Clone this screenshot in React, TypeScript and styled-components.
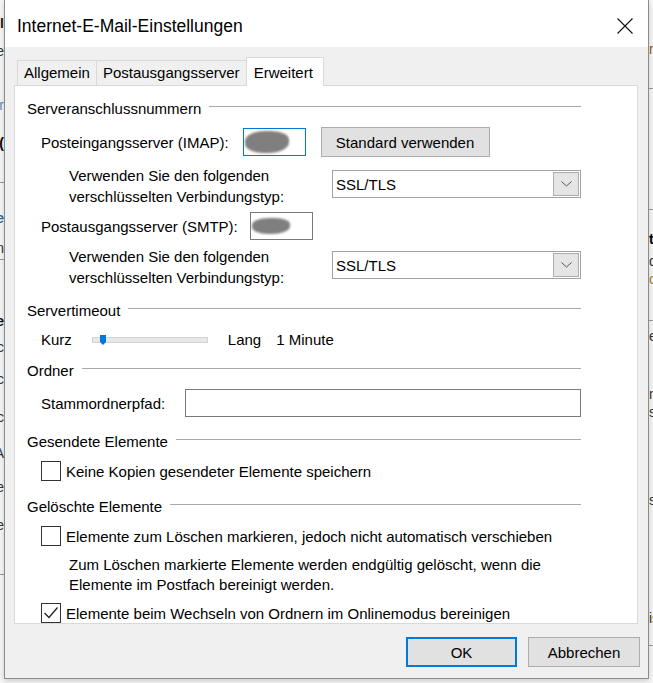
import React from "react";
import styled, { createGlobalStyle } from "styled-components";

const GlobalStyle = createGlobalStyle`
  html, body {
    margin: 0;
    padding: 0;
  }

  body {
    background: #f4f4f4;
    font-family: "Liberation Sans", Arial, sans-serif;
    color: #000;
  }
`;

type Mark = { gap: number; text?: string; color?: string; bold?: boolean; line?: boolean };

const leftMarks: Mark[] = [
  { gap: 14, text: "I", color: "#222", bold: true },
  { gap: 10, text: "e", color: "#333" },
  { gap: 36, text: "r", color: "#6a8bb3" },
  { gap: 20, text: "(", color: "#000", bold: true },
  { gap: 30, line: true },
  { gap: 26, text: "e", color: "#3d6a99", bold: true },
  { gap: 12, text: "n", color: "#333" },
  { gap: 2, line: true },
  { gap: 52, text: "e", color: "#111", bold: true },
  { gap: 8, text: "c", color: "#333" },
  { gap: 14, text: "c", color: "#333" },
  { gap: 20, text: "c", color: "#333" },
  { gap: 18, text: "A", color: "#333" },
  { gap: 16, text: "e", color: "#333" },
  { gap: 20, text: "e", color: "#333" },
  { gap: 40, line: true },
];

const rightMarks: Mark[] = [
  { gap: 40, text: "r", color: "#9a5b12" },
  { gap: 30, line: true },
  { gap: 120, line: true },
  { gap: 20, text: "t", color: "#000", bold: true },
  { gap: 4, text: "d", color: "#333" },
  { gap: 0, text: "c", color: "#b07a2a" },
  { gap: 32, line: true },
  { gap: 6, text: "e", color: "#333" },
  { gap: 40, text: "n", color: "#333" },
  { gap: 0, text: "s", color: "#333" },
  { gap: 70, text: "s", color: "#333" },
  { gap: 100, text: "is", color: "#333" },
  { gap: 18, line: true },
];

const Page = styled.div`
  display: flex;
  width: 653px;
  height: 683px;
  overflow: hidden;
  background: #f7f7f7;
`;

const Edge = styled.div<{ $side: "left" | "right" }>`
  width: 4px;
  flex: none;
  display: flex;
  flex-direction: column;
  overflow: hidden;
  align-items: ${(p) => (p.$side === "left" ? "flex-end" : "flex-start")};
`;

const EdgeMark = styled.div<{ $gap: number; $color?: string; $bold?: boolean }>`
  margin-top: ${(p) => p.$gap}px;
  height: 18px;
  line-height: 18px;
  font-size: 14px;
  font-weight: ${(p) => (p.$bold ? 700 : 400)};
  color: ${(p) => p.$color || "#333"};
  white-space: nowrap;
`;

const EdgeLine = styled.div<{ $gap: number }>`
  margin-top: ${(p) => p.$gap}px;
  width: 20px;
  height: 1px;
  flex: none;
  background: #9a9a9a;
`;

const Dialog = styled.div`
  width: 645px;
  height: 679px;
  flex: none;
  box-sizing: border-box;
  border: 1px solid #8c8c8c;
  border-top: none;
  display: flex;
  flex-direction: column;
  background: #f0f0f0;
  box-shadow: 0 2px 6px rgba(0, 0, 0, 0.18);
  position: relative;
  z-index: 2;
`;

const TitleBar = styled.div`
  height: 47px;
  flex: none;
  background: #fff;
  display: flex;
  justify-content: space-between;
  align-items: flex-start;
  box-sizing: border-box;
  padding: 16px 15px 0 12px;
`;

const Title = styled.div`
  font-size: 17.5px;
  line-height: 20px;
`;

const CloseIcon = styled.svg`
  margin-top: 2px;
  width: 16px;
  height: 16px;
`;

const Body = styled.div`
  flex: 1;
  padding-top: 10px;
  display: flex;
  flex-direction: column;
`;

const TabRow = styled.div`
  display: flex;
  align-items: flex-end;
  height: 28px;
  margin-left: 9px;
  padding-left: 3px;
`;

const Tab = styled.div<{ $active?: boolean }>`
  box-sizing: border-box;
  height: ${(p) => (p.$active ? 29 : 25)}px;
  line-height: ${(p) => (p.$active ? 29 : 24)}px;
  border: 1px solid #d9d9d9;
  border-bottom: none;
  padding: ${(p) => (p.$active ? "0 10px 0 7px" : "0 6px")};
  background: ${(p) => (p.$active ? "#fff" : "#f0f0f0")};
  margin-bottom: ${(p) => (p.$active ? -1 : 0)}px;
  font-size: 15px;
  position: relative;
  z-index: ${(p) => (p.$active ? 1 : 0)};

  & + & {
    margin-left: -1px;
  }
`;

const Panel = styled.div`
  margin: 0 10px 0 9px;
  height: 539px;
  box-sizing: border-box;
  border: 1px solid #d9d9d9;
  background: #fff;
  padding: 13px 56px 0 12px;
  overflow: hidden;
  display: flex;
  flex-direction: column;
  font-size: 15px;
`;

const GroupHeader = styled.div<{ $top?: number }>`
  display: flex;
  align-items: center;
  height: 20px;
  line-height: 20px;
  margin-top: ${(p) => p.$top || 0}px;
  white-space: nowrap;
`;

const Rule = styled.div`
  flex: 1;
  height: 1px;
  background: #a9a9a9;
  margin: -5px 0 0 8px;
`;

const Row = styled.div<{ $top: number; $h: number; $indent?: number }>`
  display: flex;
  align-items: center;
  height: ${(p) => p.$h}px;
  margin-top: ${(p) => p.$top}px;
  padding-left: ${(p) => p.$indent ?? 14}px;
  white-space: nowrap;
`;

const PortInput = styled.div<{ $focused?: boolean; $offset: number }>`
  box-sizing: border-box;
  width: 63px;
  height: 28px;
  margin-left: ${(p) => p.$offset}px;
  border: 1px solid ${(p) => (p.$focused ? "#0078d7" : "#7a7a7a")};
  background: #fff;
  display: flex;
  align-items: center;
  padding-left: 1px;
`;

const Blob = styled.div<{ $w: number; $h: number }>`
  width: ${(p) => p.$w}px;
  height: ${(p) => p.$h}px;
  background: #7f7f7f;
  border-radius: 45% 40% 48% 42%;
  filter: blur(1.2px);
`;

const PushButton = styled.div<{ $w: number; $default?: boolean }>`
  box-sizing: border-box;
  width: ${(p) => p.$w}px;
  height: 30px;
  background: #e1e1e1;
  border: ${(p) => (p.$default ? "2px solid #0078d7" : "1px solid #adadad")};
  display: flex;
  align-items: center;
  justify-content: center;
  font-size: 15px;
`;

const EncryptionRow = styled.div<{ $top: number }>`
  display: grid;
  grid-template-columns: 1fr 249px;
  margin-top: ${(p) => p.$top}px;
  padding-left: 42px;
  line-height: 21px;
`;

const Select = styled.div`
  box-sizing: border-box;
  height: 28px;
  margin-top: 5px;
  border: 1px solid #a2a2a2;
  background: #fff;
  display: flex;
  align-items: center;
  justify-content: space-between;
  padding: 0 1px 0 3px;
`;

const ArrowBox = styled.div`
  box-sizing: border-box;
  width: 26px;
  height: 24px;
  background: #e5e5e5;
  border: 1px solid #adadad;
  display: flex;
  align-items: center;
  justify-content: center;
`;

const Track = styled.div`
  position: relative;
  box-sizing: border-box;
  width: 116px;
  height: 6px;
  margin: 0 20px;
  background: #e7e9e9;
  border: 1px solid #d4d4d4;
`;

const Thumb = styled.svg`
  position: absolute;
  left: 7px;
  top: -3px;
  width: 6px;
  height: 10px;
`;

const Spacer = styled.span<{ $w: number }>`
  display: inline-block;
  width: ${(p) => p.$w}px;
`;

const PathInput = styled.div`
  flex: 1;
  box-sizing: border-box;
  height: 28px;
  margin-left: 20px;
  border: 1px solid #7a7a7a;
  background: #fff;
`;

const Box = styled.div`
  box-sizing: border-box;
  width: 20px;
  height: 20px;
  flex: none;
  border: 1px solid #333;
  background: #fff;
  margin-right: 5px;
  display: flex;
  align-items: center;
  justify-content: center;
`;

const Note = styled.div`
  margin-top: 9px;
  padding-left: 42px;
  line-height: 20px;
`;

const ButtonRow = styled.div`
  display: flex;
  justify-content: flex-end;
  gap: 11px;
  margin-top: 13px;
  padding-right: 8px;
`;

const Checkbox = ({ checked }: { checked?: boolean }) => (
  <Box>
    {checked && (
      <svg width="18" height="18" viewBox="0 0 18 18">
        <path d="M2.5 9 L7 13.5 L15.5 3.5" fill="none" stroke="#222" strokeWidth="1.3" />
      </svg>
    )}
  </Box>
);

const Dropdown = ({ value }: { value: string }) => (
  <Select>
    <span>{value}</span>
    <ArrowBox>
      <svg width="11" height="6" viewBox="0 0 11 6">
        <path d="M0.5 0.5 L5.5 5 L10.5 0.5" fill="none" stroke="#555" strokeWidth="1" />
      </svg>
    </ArrowBox>
  </Select>
);

const EdgeColumn = ({ side, marks }: { side: "left" | "right"; marks: Mark[] }) => (
  <Edge $side={side}>
    {marks.map((m, i) =>
      m.line ? (
        <EdgeLine key={i} $gap={m.gap} />
      ) : (
        <EdgeMark key={i} $gap={m.gap} $color={m.color} $bold={m.bold}>
          {m.text}
        </EdgeMark>
      )
    )}
  </Edge>
);

const App = () => {
  return (
    <>
      <GlobalStyle />
      <Page>
        <EdgeColumn side="left" marks={leftMarks} />

        <Dialog>
          <TitleBar>
            <Title>Internet-E-Mail-Einstellungen</Title>
            <CloseIcon viewBox="0 0 16 16">
              <path d="M0.5 0.5 L15.5 15.5 M15.5 0.5 L0.5 15.5" stroke="#111" strokeWidth="1.1" />
            </CloseIcon>
          </TitleBar>

          <Body>
            <TabRow>
              <Tab>Allgemein</Tab>
              <Tab>Postausgangsserver</Tab>
              <Tab $active>Erweitert</Tab>
            </TabRow>

            <Panel>
              <GroupHeader>
                Serveranschlussnummern
                <Rule />
              </GroupHeader>

              <Row $top={8} $h={30}>
                Posteingangsserver (IMAP):
                <PortInput $focused $offset={14}>
                  <Blob $w={44} $h={22} />
                </PortInput>
                <Spacer $w={15} />
                <PushButton $w={169}>Standard verwenden</PushButton>
              </Row>

              <EncryptionRow $top={8}>
                <div>
                  Verwenden Sie den folgenden
                  <br />
                  verschlüsselten Verbindungstyp:
                </div>
                <Dropdown value="SSL/TLS" />
              </EncryptionRow>

              <Row $top={5} $h={28}>
                Postausgangsserver (SMTP):
                <PortInput $offset={12}>
                  <Blob $w={38} $h={16} />
                </PortInput>
              </Row>

              <EncryptionRow $top={6}>
                <div>
                  Verwenden Sie den folgenden
                  <br />
                  verschlüsselten Verbindungstyp:
                </div>
                <Dropdown value="SSL/TLS" />
              </EncryptionRow>

              <GroupHeader $top={13}>
                Servertimeout
                <Rule />
              </GroupHeader>

              <Row $top={9} $h={20}>
                Kurz
                <Track>
                  <Thumb viewBox="0 0 6 10">
                    <path d="M0 0 H6 V7 L3 10 L0 7 Z" fill="#0078d7" />
                  </Thumb>
                </Track>
                Lang
                <Spacer $w={15} />
                1 Minute
              </Row>

              <GroupHeader $top={12}>
                Ordner
                <Rule />
              </GroupHeader>

              <Row $top={8} $h={28}>
                Stammordnerpfad:
                <PathInput />
              </Row>

              <GroupHeader $top={15}>
                Gesendete Elemente
                <Rule />
              </GroupHeader>

              <Row $top={9} $h={20}>
                <Checkbox />
                Keine Kopien gesendeter Elemente speichern
              </Row>

              <GroupHeader $top={16}>
                Gelöschte Elemente
                <Rule />
              </GroupHeader>

              <Row $top={9} $h={20}>
                <Checkbox />
                Elemente zum Löschen markieren, jedoch nicht automatisch verschieben
              </Row>

              <Note>
                Zum Löschen markierte Elemente werden endgültig gelöscht, wenn die
                <br />
                Elemente im Postfach bereinigt werden.
              </Note>

              <Row $top={8} $h={20}>
                <Checkbox checked />
                Elemente beim Wechseln von Ordnern im Onlinemodus bereinigen
              </Row>
            </Panel>

            <ButtonRow>
              <PushButton $w={111} $default>
                OK
              </PushButton>
              <PushButton $w={112}>Abbrechen</PushButton>
            </ButtonRow>
          </Body>
        </Dialog>

        <EdgeColumn side="right" marks={rightMarks} />
      </Page>
    </>
  );
};

export default App;
